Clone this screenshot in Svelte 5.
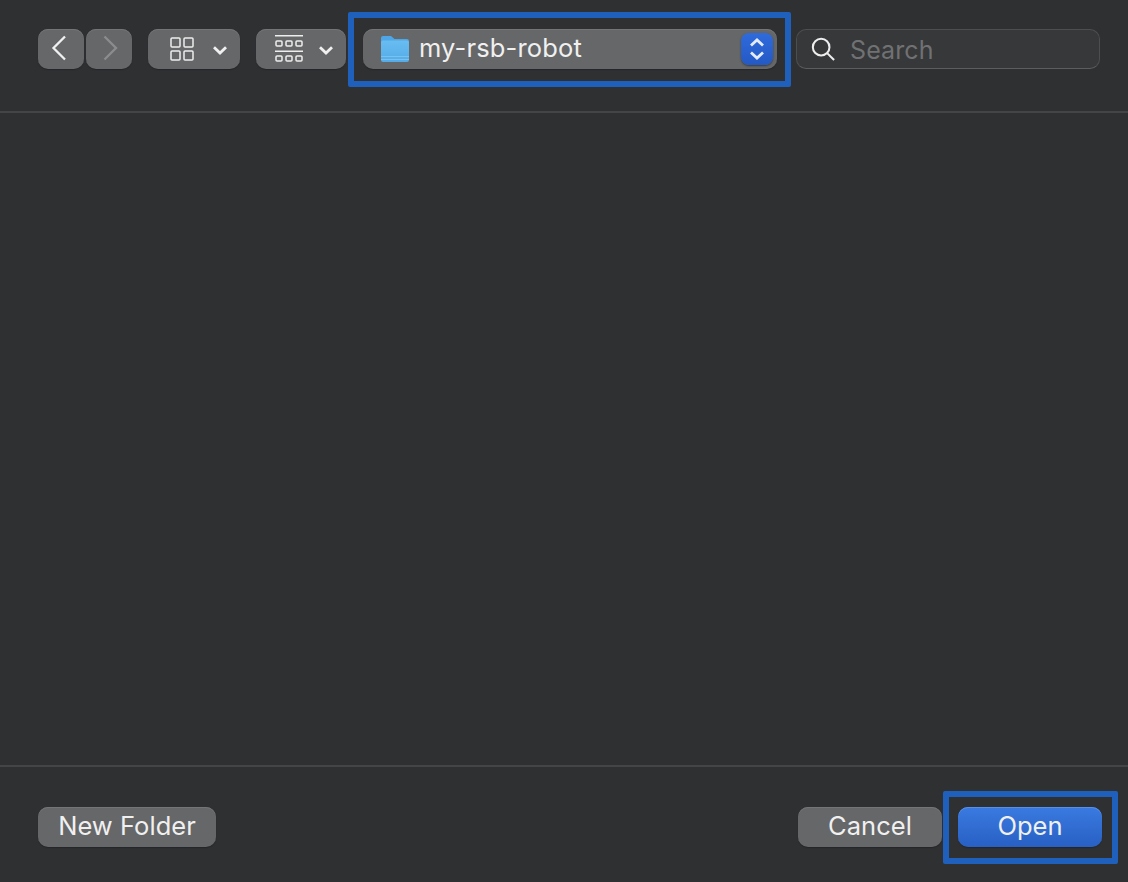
<script>
  let folder = $state('my-rsb-robot');
  let query = $state('');
</script>

<div class="dialog">
  <header class="toolbar">
    <div class="nav">
      <button type="button" class="btn nav-btn" aria-label="Back">
        <svg viewBox="0 0 46 40" width="46" height="40" fill="none" stroke="#f0f0f0" stroke-width="2.300"><path d="M27 7.500 15.500 19 27 30.500"/></svg>
      </button>
      <button type="button" class="btn nav-btn" aria-label="Forward">
        <svg viewBox="0 0 46 40" width="46" height="40" fill="none" stroke="#8b8c8d" stroke-width="2.300"><path d="M18.500 7.500 30 19 18.500 30.500"/></svg>
      </button>
    </div>

    <button type="button" class="btn view-btn" aria-label="View as icons">
      <svg class="grid-icon" viewBox="0 0 24 24" width="24" height="24" fill="none" stroke="#eeeeee" stroke-width="1.500">
        <rect x="1" y="1" width="9" height="9" rx="1"/><rect x="14" y="1" width="9" height="9" rx="1"/>
        <rect x="1" y="14" width="9" height="9" rx="1"/><rect x="14" y="14" width="9" height="9" rx="1"/>
      </svg>
      <svg class="chev" viewBox="0 0 14 9" width="14" height="9" fill="none" stroke="#f0f0f0" stroke-width="2.800"><path d="M1 1.200 7 7l6-5.800"/></svg>
    </button>

    <button type="button" class="btn group-btn" aria-label="Group items">
      <svg class="rows-icon" viewBox="0 0 28 28" width="28" height="28" fill="none" stroke="#eeeeee" stroke-width="1.500">
        <path d="M0 .75h28M0 16.250h28"/>
        <rect x="1" y="6" width="6" height="5" rx="1"/><rect x="11" y="6" width="6" height="5" rx="1"/><rect x="21" y="6" width="6" height="5" rx="1"/>
        <rect x="1" y="21" width="6" height="5" rx="1"/><rect x="11" y="21" width="6" height="5" rx="1"/><rect x="21" y="21" width="6" height="5" rx="1"/>
      </svg>
      <svg class="chev" viewBox="0 0 14 9" width="14" height="9" fill="none" stroke="#f0f0f0" stroke-width="2.800"><path d="M1 1.200 7 7l6-5.800"/></svg>
    </button>

    <div class="btn popup marked">
      <svg class="folder" viewBox="0 0 28 26" width="28" height="26">
        <defs>
          <linearGradient id="folderFill" x1="0" y1="0" x2="0" y2="1">
            <stop offset="0" stop-color="#68bdf1"/><stop offset="1" stop-color="#54abe7"/>
          </linearGradient>
        </defs>
        <path d="M0 2a2 2 0 0 1 2-2h8l3.500 3h12.500a2 2 0 0 1 2 2v2H0z" fill="#4fa6e6"/>
        <path d="M0 6.500a2 2 0 0 1 2-2h24a2 2 0 0 1 2 2V24a2 2 0 0 1-2 2H2a2 2 0 0 1-2-2z" fill="url(#folderFill)"/>
        <path d="M0 20.500h28M0 23.500h28" stroke="#78c2f0" stroke-width="1"/>
      </svg>
      <span class="folder-name">{folder}</span>
      <span class="stepper">
        <svg viewBox="0 0 32 32" width="32" height="32" fill="none" stroke="#e4ebfb" stroke-width="2.800"><path d="M10 12.500l6-5.500 6 5.500M10 19.500l6 5.500 6-5.500"/></svg>
      </span>
    </div>

    <label class="search">
      <svg viewBox="0 0 26 26" width="24" height="24" fill="none" stroke="#eeeeee" stroke-width="2.200"><circle cx="11" cy="11" r="9"/><path d="M17.500 17.500 25 25"/></svg>
      <input type="text" placeholder="Search" bind:value={query} />
    </label>
  </header>

  <main class="file-list"></main>

  <footer class="footer">
    <button type="button" class="btn text-btn new-folder">New Folder</button>
    <div class="actions">
      <button type="button" class="btn text-btn action">Cancel</button>
      <button type="button" class="btn text-btn action primary marked">Open</button>
    </div>
  </footer>
</div>

<style>
  :global(body) {
    margin: 0;
    background: #2f3032;
  }

  .dialog {
    display: flex;
    flex-direction: column;
    height: 882px;
    background: #2f3032;
    font-family: Inter, "Liberation Sans", sans-serif;
    color: #eeeeee;
    overflow: hidden;
  }

  .toolbar {
    display: flex;
    align-items: flex-start;
    height: 113px;
    padding: 29px 0 0 38px;
    box-sizing: border-box;
    border-bottom: 2px solid #444547;
  }

  .file-list { flex: 1; }

  .footer {
    display: flex;
    justify-content: space-between;
    height: 117px;
    box-sizing: border-box;
    padding: 40px 26px 0 38px;
    border-top: 2px solid #444547;
  }

  .btn {
    display: flex;
    align-items: center;
    box-sizing: border-box;
    height: 40px;
    padding: 0;
    border: none;
    border-radius: 10px;
    background: #666768;
    box-shadow: inset 0 1px 0 #747577, 0 1px 1px #252628;
    font: inherit;
    color: inherit;
  }

  .nav { display: flex; gap: 2px; }
  .nav-btn { width: 46px; }

  .view-btn { width: 92px; margin-left: 16px; padding-left: 22px; }
  .view-btn .chev { margin-left: 19px; }
  .group-btn { width: 90px; margin-left: 16px; padding-left: 19px; }
  .group-btn .chev { margin-left: 16px; }
  .grid-icon { flex-shrink: 0; }
  .rows-icon { flex-shrink: 0; margin-top: -1px; }
  .chev { flex-shrink: 0; margin-top: 2px; }

  .popup {
    position: relative;
    width: 414px;
    margin-left: 17px;
    padding-left: 18px;
  }
  .folder { flex-shrink: 0; }
  .folder-name {
    margin-left: 10px;
    margin-top: -4px;
    font-size: 25.500px;
    font-weight: 400;
    letter-spacing: 0.15px;
    color: #f0f0f0;
  }
  .stepper {
    display: flex;
    margin-left: auto;
    margin-right: 4px;
    border-radius: 8px;
    background: linear-gradient(#2f6bdc, #2459c4);
    box-shadow: 0 1px 2px #3a3b3c;
  }

  /* annotation boxes drawn over the screenshot */
  .marked::after {
    content: '';
    position: absolute;
    border: 6px solid #1f60bd;
    border-radius: 2px;
    pointer-events: none;
  }
  .popup.marked::after { inset: -17px -14px -18px -15px; }
  .primary.marked::after { inset: -16px -16px -17px -15px; }

  .search {
    display: flex;
    align-items: center;
    box-sizing: border-box;
    width: 304px;
    height: 40px;
    margin-left: 19px;
    padding-left: 14px;
    border: 1px solid #4d4e50;
    border-bottom-color: #5c5d5f;
    border-radius: 10px;
    background: #37383a;
  }
  .search svg { flex-shrink: 0; }
  .search input {
    width: 200px;
    margin-left: 15px;
    margin-top: 2px;
    padding: 0;
    border: none;
    outline: none;
    background: none;
    font: inherit;
    font-size: 25px;
    letter-spacing: 0.1px;
    color: #eeeeee;
  }
  .search input::placeholder { color: #707173; opacity: 1; }

  .text-btn {
    justify-content: center;
    padding-bottom: 4px;
    font-size: 25.500px;
    letter-spacing: 0.05px;
    color: #f0f0f0;
  }
  .new-folder { width: 178px; }
  .actions { display: flex; gap: 16px; }
  .action { width: 144px; }
  .primary {
    position: relative;
    background: linear-gradient(#3a7ae0, #2860c4);
    box-shadow: inset 0 1px 0 #5590ea, 0 1px 1px #252628;
  }
</style>
